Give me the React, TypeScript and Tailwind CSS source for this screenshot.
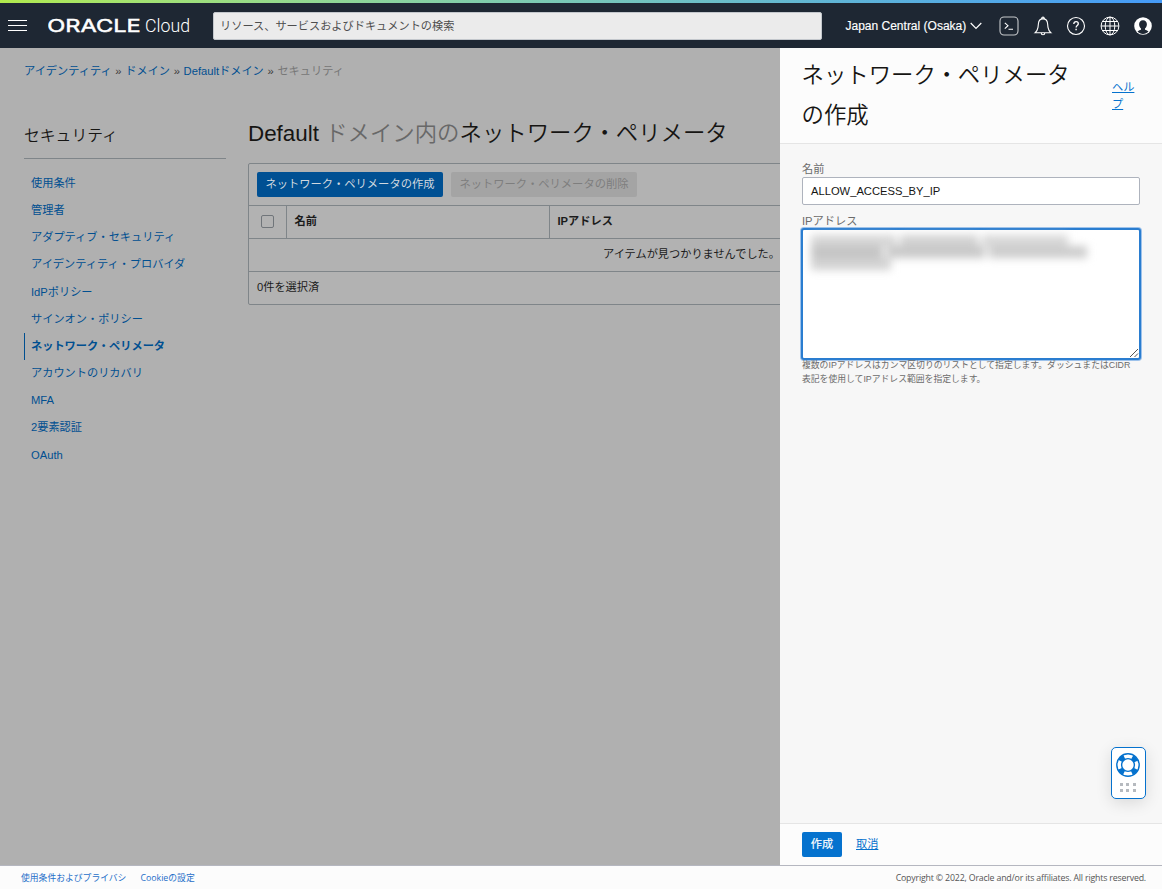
import React from "react";

const navItems = [
  "使用条件",
  "管理者",
  "アダプティブ・セキュリティ",
  "アイデンティティ・プロバイダ",
  "IdPポリシー",
  "サインオン・ポリシー",
  "ネットワーク・ペリメータ",
  "アカウントのリカバリ",
  "MFA",
  "2要素認証",
  "OAuth",
];

function Logo() {
  return (
    <svg className="block" width="144" height="24" viewBox="0 0 144 24" fill="#fff">
      <text x="-0.8" y="18" fontFamily="Inter, sans-serif" fontWeight="400" fontSize="17.2" textLength="93.5" lengthAdjust="spacingAndGlyphs" stroke="#fff" strokeWidth="0.45">ORACLE</text>
      <text x="97" y="18" fontFamily="Roboto, sans-serif" fontWeight="300" fontSize="18.5" textLength="45" lengthAdjust="spacingAndGlyphs">Cloud</text>
    </svg>
  );
}

function TerminalIcon() {
  return (
    <svg width="20" height="20" viewBox="0 0 20 20" fill="none" stroke="#fff" strokeWidth="1.1">
      <rect x="1" y="1" width="18" height="18" rx="4" strokeOpacity="0.75" />
      <path d="M5.8 6.8 9 9.7 5.8 12.6M9.5 13.2h4.5" />
    </svg>
  );
}

function BellIcon() {
  return (
    <svg width="20" height="20" viewBox="0 0 20 20" fill="none" stroke="#fff" strokeWidth="1.1">
      <path d="M8.8 2.9v-.6a1.2 1.2 0 0 1 2.4 0v.6M10 2.9C7 2.9 5.6 5 5.4 7.8L5 11.4C4.7 13.6 3.8 15.2 2 16.8h16c-1.8-1.6-2.7-3.2-3-5.4l-.4-3.6C14.4 5 13 2.9 10 2.9ZM8.2 17a1.8 1.8 0 0 0 3.6 0" />
    </svg>
  );
}

function HelpIcon() {
  return (
    <svg width="20" height="20" viewBox="0 0 20 20" fill="none" stroke="#fff" strokeWidth="1.1">
      <circle cx="10" cy="10" r="8.5" />
      <path d="M7.8 7.9c0-1.4.9-2.2 2.3-2.2s2.2.8 2.2 2c0 1.8-2.2 1.8-2.2 3.9" strokeWidth="1.3" />
      <path d="M10.1 12.8v1.5" strokeWidth="1.4" />
    </svg>
  );
}

function GlobeIcon() {
  return (
    <svg width="20" height="20" viewBox="0 0 20 20" fill="none" stroke="#fff" strokeWidth="1">
      <circle cx="10" cy="10" r="8.9" />
      <ellipse cx="10" cy="10" rx="4.8" ry="8.9" />
      <path d="M10 1.1v17.8M1.1 10h17.8M2.6 5.5h14.8M2.6 14.5h14.8" />
    </svg>
  );
}

function UserIcon() {
  return (
    <svg width="20" height="20" viewBox="0 0 20 20">
      <circle cx="10" cy="10" r="8.8" fill="#fff" />
      <path d="M10 4.2c-2.5 0-3.9 1.7-3.9 4.1 0 1.9.8 3.3 1.9 4.1v1.3c-1.4.4-2.7.9-3.5 1.7 1.4 1.6 3.3 2.5 5.5 2.5s4.1-.9 5.5-2.5c-.8-.8-2.1-1.3-3.5-1.7v-1.3c1.1-.8 1.9-2.2 1.9-4.1 0-2.4-1.4-4.1-3.9-4.1Z" fill="#1e2733" />
    </svg>
  );
}

function LifeRing() {
  return (
    <svg className="-ml-0.5" width="24" height="24" viewBox="0 0 24 24" fill="none">
      <circle cx="12" cy="12" r="8.7" stroke="#0572ce" strokeWidth="5" strokeDasharray="5.6 8.066" strokeDashoffset="-4.033" />
      <circle cx="12" cy="12" r="11.2" stroke="#0572ce" strokeWidth="1.4" />
      <circle cx="12" cy="12" r="6.4" stroke="#0572ce" strokeWidth="1.4" />
    </svg>
  );
}

function Header() {
  return (
    <header className="flex h-12 shrink-0 flex-col bg-[#1e2733]">
      <div className="h-[3px] bg-linear-to-r from-[#b1ea4d] to-[#459af8]" />
      <div className="flex h-[45px] items-center pl-2 text-white">
        <div className="flex w-10 flex-col gap-1">
          <span className="h-px w-[19px] bg-white" />
          <span className="h-px w-[19px] bg-white" />
          <span className="h-px w-[19px] bg-white" />
        </div>
        <div className="w-[165px]">
          <Logo />
        </div>
        <div className="flex h-7 w-[609px] items-center rounded-xs border border-[#c3c7cc] bg-[#ebebeb] px-1.5 pt-0.5 text-[11.2px] text-[#4d4d4d]">
          リソース、サービスおよびドキュメントの検索
        </div>
        <div className="ml-[23.5px] flex w-[153.5px] items-center text-[12px] [-webkit-text-stroke:0.15px_#fff]">
          <span className="w-[121px] whitespace-nowrap">Japan Central (Osaka)</span>
          <svg className="ml-[3px]" width="12" height="8" viewBox="0 0 12 8" fill="none" stroke="#fff" strokeWidth="1.2">
            <path d="m.7 1 5.3 5.5L11.3 1" />
          </svg>
        </div>
        <div className="flex items-center gap-[13.5px]">
          <TerminalIcon />
          <BellIcon />
          <HelpIcon />
          <GlobeIcon />
          <UserIcon />
        </div>
      </div>
    </header>
  );
}

function Sidebar() {
  return (
    <aside className="w-[202px] shrink-0">
      <h2 className="h-[39px] border-b border-[#7f8589] text-[15.8px] leading-[31px] font-[350] text-[#161513]">セキュリティ</h2>
      <nav className="pt-[10.6px]">
        {navItems.map((item) => (
          <a
            key={item}
            className={
              item === "ネットワーク・ペリメータ"
                ? "flex h-[27.2px] items-center border-l border-[#004f90] pl-1.5 font-bold text-[#004f90]"
                : "flex h-[27.2px] items-center border-l border-transparent pl-1.5 text-[#004f90]"
            }
          >
            {item}
          </a>
        ))}
      </nav>
    </aside>
  );
}

function PerimeterTable() {
  return (
    <section className="flex w-[560px] flex-col rounded-xs border border-[#7f8589] bg-[#b2b2b2] text-[#1b1b1b]">
      <div className="flex h-[41px] items-center gap-2 px-2">
        <button className="h-[25px] w-[186px] rounded-xs bg-[#005093] text-[11.3px] text-[#d0d8df]">ネットワーク・ペリメータの作成</button>
        <button className="h-[25px] w-[186px] rounded-xs bg-[#a4a4a4] text-[11.3px] text-[#7e7e7e]">ネットワーク・ペリメータの削除</button>
      </div>
      <div className="flex h-[34px] border-y border-[#7f8589] pb-px font-bold">
        <div className="-mb-px flex w-[38px] items-center justify-center border-r border-[#7f8589] pb-px">
          <span className="size-[13px] rounded-xs border border-[#70757a]" />
        </div>
        <div className="-mb-px flex w-[263px] items-center border-r border-[#7f8589] pb-px pl-[7.5px]">名前</div>
        <div className="flex items-center pl-[7.5px]">IPアドレス</div>
      </div>
      <div className="flex h-[33px] items-center border-b border-[#7f8589] pb-px pl-[354px] whitespace-nowrap">アイテムが見つかりませんでした。</div>
      <div className="flex h-8 items-center pb-px pl-2">0件を選択済</div>
    </section>
  );
}

function RedactedLines() {
  return (
    <div className="flex flex-col blur-[4px]">
      <div className="flex gap-1">
        <span className="h-[11px] w-[85px] bg-[#d6d6d6]" />
        <span className="h-[11px] w-[78px] bg-[#d2d2d2]" />
        <span className="h-[11px] w-[86px] bg-[#d8d8d8]" />
      </div>
      <div className="flex gap-1">
        <span className="h-3 w-[72px] bg-[#c4c4c4]" />
        <span className="h-3 w-[98px] bg-[#c8c8c8]" />
        <span className="h-3 w-[98px] bg-[#cccccc]" />
      </div>
      <div className="flex">
        <span className="h-3 w-[80px] bg-[#d2d2d2]" />
      </div>
    </div>
  );
}

function SupportWidget() {
  return (
    <div className="absolute top-[747px] left-[1111px] flex h-[52px] w-[35px] flex-col items-center gap-1.5 rounded-[5px] border border-[#0572ce] bg-white pt-[5px] shadow-[0_4px_16px_rgba(0,0,0,0.12)]">
      <LifeRing />
      <div className="-ml-0.5 grid grid-cols-3 gap-x-[3.5px] gap-y-[3px]">
        <i className="size-[3px] bg-[#b6babf]" />
        <i className="size-[3px] bg-[#b6babf]" />
        <i className="size-[3px] bg-[#b6babf]" />
        <i className="size-[3px] bg-[#b6babf]" />
        <i className="size-[3px] bg-[#b6babf]" />
        <i className="size-[3px] bg-[#b6babf]" />
      </div>
    </div>
  );
}

function Drawer() {
  return (
    <aside className="flex w-[382px] shrink-0 flex-col bg-[#f7f7f7]">
      <div className="flex h-24 shrink-0 border-b border-[#e5e5e5] bg-[#fcfcfc] pl-[21.5px]">
        <h1 className="w-[310.5px] pt-2 text-[22.4px] leading-10 font-[350] text-[#161513]">
          ネットワーク・ペリメータ
          <br />
          の作成
        </h1>
        <a className="w-6 pt-[31px] text-[11.2px] leading-[17px] text-[#0572ce] underline">
          ヘル
          <br />プ
        </a>
      </div>
      <div className="flex flex-1 flex-col px-[22px] pt-[17px]">
        <label className="h-4 leading-4 text-[#6b6b6b]">名前</label>
        <div className="flex h-7 items-center rounded-xs border border-[#aeb3bd] bg-white pl-2 text-[#161513]">ALLOW_ACCESS_BY_IP</div>
        <label className="mt-2 h-[15px] leading-4 text-[#6b6b6b]">IPアドレス</label>
        <div className="-mx-px flex h-[132px] justify-between rounded-[3px] border-2 border-[#2a7dd0] bg-white shadow-[0_0_0_1px_#9dc2eb]">
          <div className="pt-[5px] pl-2">
            <RedactedLines />
          </div>
          <svg className="self-end" width="10" height="10" viewBox="0 0 10 10" stroke="#555" strokeWidth="1">
            <path d="M1 9 9 1M5.5 9 9 5.5" />
          </svg>
        </div>
        <p className="-mt-[2px] text-[8.82px] leading-[14px] whitespace-nowrap text-[#6b6b6b]">
          複数のIPアドレスはカンマ区切りのリストとして指定します。ダッシュまたはCIDR
          <br />
          表記を使用してIPアドレス範囲を指定します。
        </p>
      </div>
      <div className="flex h-[42px] shrink-0 items-center gap-3.5 border-t border-[#e5e5e5] bg-[#fcfcfc] pl-[22px]">
        <button className="h-[25px] w-10 rounded-xs bg-[#0572ce] text-white [-webkit-text-stroke:0.2px_#fff]">作成</button>
        <a className="text-[#0572ce] underline">取消</a>
      </div>
    </aside>
  );
}

export default function App() {
  return (
    <div className="relative flex h-[889px] w-[1162px] flex-col overflow-hidden bg-[#b0b0b0] font-['Liberation_Sans','Noto_Sans_CJK_JP',sans-serif] text-[11.2px]" lang="ja">
      <Header />
      <div className="flex h-[817px] shrink-0">
        <main className="w-[780px] shrink-0 overflow-hidden pl-6">
          <div className="flex h-[72px] gap-[3.7px] pt-[14px] leading-[18px] text-[#004f90]">
            <a>アイデンティティ</a>
            <span className="text-[#3c3c3c]">»</span>
            <a>ドメイン</a>
            <span className="text-[#3c3c3c]">»</span>
            <a>Defaultドメイン</a>
            <span className="text-[#3c3c3c]">»</span>
            <span className="text-[#777]">セキュリティ</span>
          </div>
          <div className="flex gap-[22px]">
            <Sidebar />
            <div className="shrink-0">
              <h1 className="h-[43px] text-[22.4px] leading-[28px] font-[350] whitespace-nowrap text-[#161513]">
                Default <span className="text-[#686868]">ドメイン内の</span>ネットワーク・ペリメータ
              </h1>
              <PerimeterTable />
            </div>
          </div>
        </main>
        <Drawer />
      </div>
      <footer className="flex h-6 shrink-0 items-center justify-between border-t border-[#b5b7c0] bg-[#fcfcfc] pt-0.5 pr-4 pl-[21px] font-['Open_Sans','Noto_Sans_CJK_JP',sans-serif] text-[8.8px] text-[#555]">
        <div className="flex gap-3.5 text-[#1f6fc9]">
          <a>使用条件およびプライバシ</a>
          <a>Cookieの設定</a>
        </div>
        <span className="tracking-[-0.18px]">Copyright © 2022, Oracle and/or its affiliates. All rights reserved.</span>
      </footer>
      <SupportWidget />
    </div>
  );
}
